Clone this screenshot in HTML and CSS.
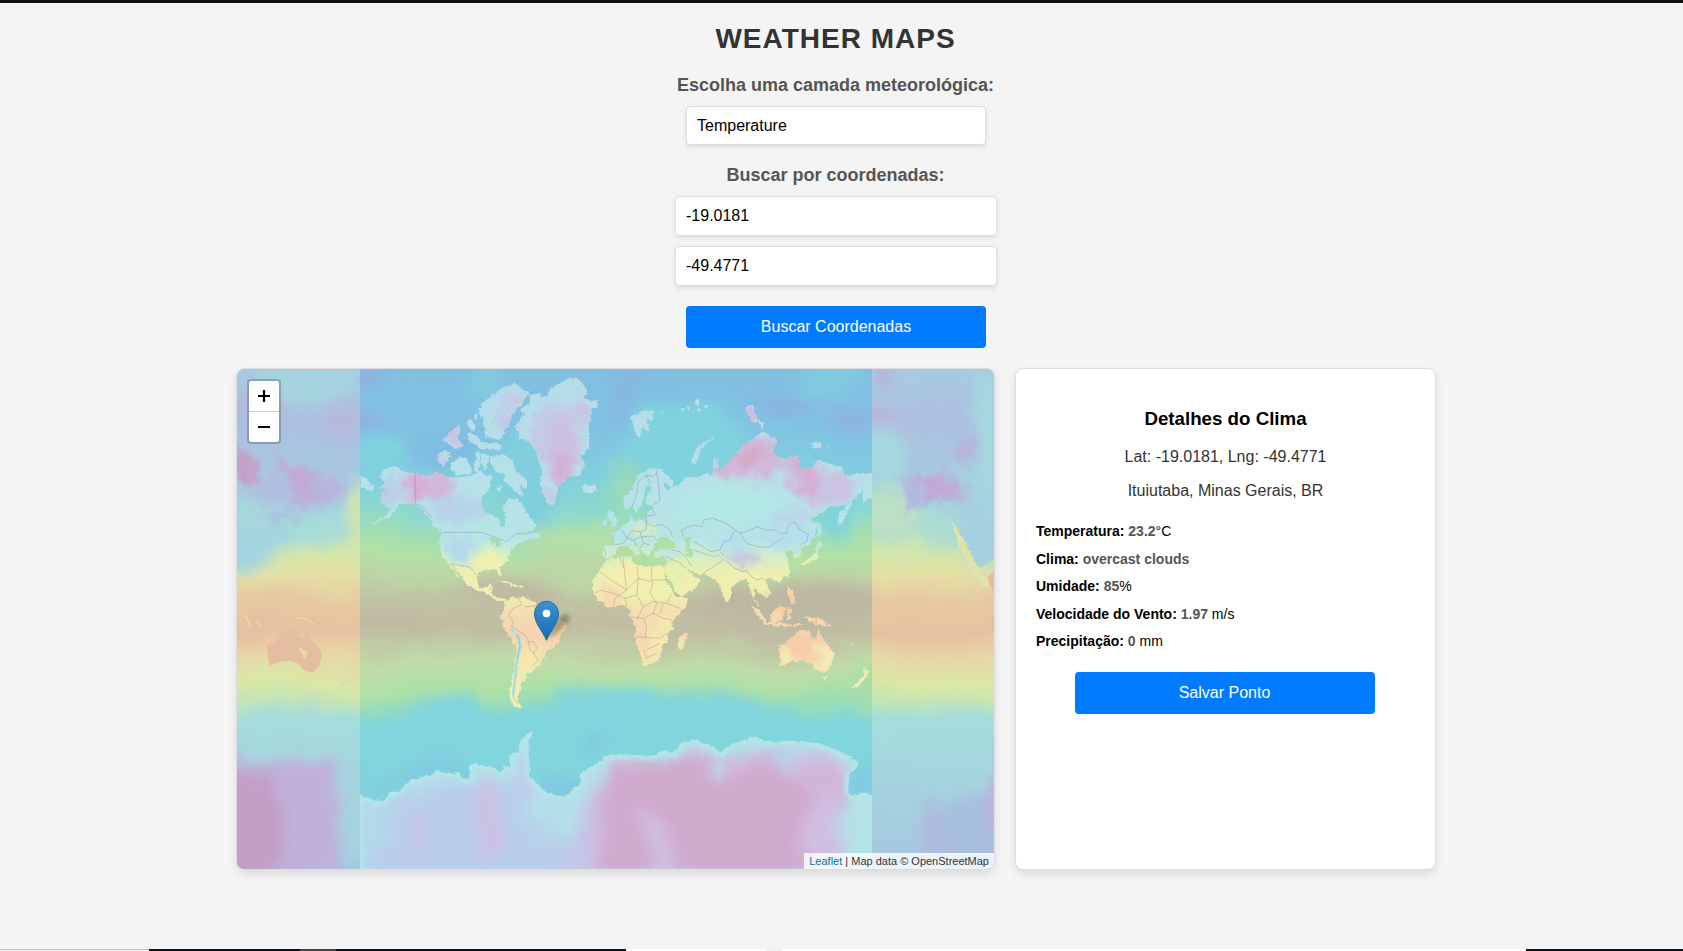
FILE: index.html
```
<!DOCTYPE html>
<html lang="pt-BR">
<head>
<meta charset="utf-8">
<title>Weather Maps</title>
<link rel="stylesheet" href="styles.css">
</head>
<body>
<div class="top-strip"></div>
<main class="page">
  <h1 class="title">WEATHER MAPS</h1>
  <div class="form">
    <label class="label">Escolha uma camada meteorológica:</label>
    <div class="field select">Temperature</div>
    <label class="label label-coords">Buscar por coordenadas:</label>
    <div class="field input">-19.0181</div>
    <div class="field input">-49.4771</div>
    <button class="button search">Buscar Coordenadas</button>
  </div>
  <div class="content">
    <section class="map">
      <svg class="map-canvas" viewBox="0 0 757 500" width="757" height="500">
        <defs>
          <linearGradient id="ocean" gradientUnits="userSpaceOnUse" x1="0" y1="0" x2="0" y2="500">
            <stop offset="0" stop-color="#81bfe1"/><stop offset=".12" stop-color="#82c2e2"/>
            <stop offset=".22" stop-color="#80d0de"/><stop offset=".29" stop-color="#8ed9cc"/>
            <stop offset=".34" stop-color="#a4deb0"/><stop offset=".375" stop-color="#b2e0a4"/>
            <stop offset=".42" stop-color="#bdd4a5"/><stop offset=".46" stop-color="#bfc4a3"/>
            <stop offset=".52" stop-color="#c1bca3"/><stop offset=".555" stop-color="#c0cba5"/>
            <stop offset=".59" stop-color="#bfdba8"/><stop offset=".64" stop-color="#aee0a6"/>
            <stop offset=".67" stop-color="#9ddcb5"/><stop offset=".71" stop-color="#84d6d8"/>
            <stop offset=".8" stop-color="#80d3df"/><stop offset=".88" stop-color="#80c8e2"/>
          </linearGradient>
          <linearGradient id="side" gradientUnits="userSpaceOnUse" x1="0" y1="0" x2="0" y2="500">
            <stop offset="0" stop-color="#a5cbe0"/><stop offset=".1" stop-color="#aebfe0"/>
            <stop offset=".18" stop-color="#a7c6e0"/><stop offset=".27" stop-color="#a4d8de"/>
            <stop offset=".33" stop-color="#aadcd4"/><stop offset=".37" stop-color="#d2e6ac"/>
            <stop offset=".41" stop-color="#e6e1a5"/><stop offset=".46" stop-color="#e6c9a1"/>
            <stop offset=".53" stop-color="#e6c1a0"/><stop offset=".58" stop-color="#e7d7a5"/>
            <stop offset=".63" stop-color="#dbe7a6"/><stop offset=".66" stop-color="#c8e5b2"/>
            <stop offset=".7" stop-color="#a5ddda"/><stop offset=".78" stop-color="#a4d7de"/>
            <stop offset="1" stop-color="#a5c5e0"/>
          </linearGradient>
          <linearGradient id="land" gradientUnits="userSpaceOnUse" x1="0" y1="0" x2="0" y2="360">
            <stop offset="0" stop-color="#b5dbe9"/><stop offset=".36" stop-color="#b6e2e8"/>
            <stop offset=".47" stop-color="#b5e5e6"/><stop offset=".52" stop-color="#d4efc8"/>
            <stop offset=".57" stop-color="#f0eeb0"/><stop offset=".63" stop-color="#efefb0"/>
            <stop offset=".67" stop-color="#f3dfb0"/><stop offset=".74" stop-color="#f5d3b0"/>
            <stop offset=".8" stop-color="#f4e2b0"/><stop offset=".9" stop-color="#f1f0b0"/>
            <stop offset="1" stop-color="#e8f0b0"/>
          </linearGradient>
          <linearGradient id="pin" x1="0" y1="0" x2="0" y2="1">
            <stop offset="0" stop-color="#3d93d2"/><stop offset="1" stop-color="#1769b5"/>
          </linearGradient>
          <filter id="soft" filterUnits="userSpaceOnUse" x="-40" y="-40" width="840" height="580">
            <feTurbulence type="fractalNoise" baseFrequency=".02" numOctaves="3" seed="6" result="n"/>
            <feGaussianBlur in="SourceGraphic" stdDeviation="7" result="b"/>
            <feDisplacementMap in="b" in2="n" scale="22" xChannelSelector="R" yChannelSelector="G"/></filter>
          <filter id="mid" filterUnits="userSpaceOnUse" x="-40" y="-40" width="840" height="580">
            <feTurbulence type="fractalNoise" baseFrequency=".07" numOctaves="3" seed="4" result="n"/>
            <feGaussianBlur in="SourceGraphic" stdDeviation="4" result="b"/>
            <feDisplacementMap in="b" in2="n" scale="20" xChannelSelector="R" yChannelSelector="G"/></filter>
          <filter id="wavy" filterUnits="userSpaceOnUse" x="-40" y="-40" width="840" height="580">
            <feTurbulence type="fractalNoise" baseFrequency=".012 .016" numOctaves="3" seed="8" result="n"/>
            <feDisplacementMap in="SourceGraphic" in2="n" scale="36" xChannelSelector="R" yChannelSelector="G"/></filter>
          <filter id="coast" filterUnits="userSpaceOnUse" x="0" y="0" width="757" height="500">
            <feTurbulence type="fractalNoise" baseFrequency=".22" numOctaves="2" seed="3" result="n"/>
            <feDisplacementMap in="SourceGraphic" in2="n" scale="5" xChannelSelector="R" yChannelSelector="G"/></filter>
          <filter id="edge" filterUnits="userSpaceOnUse" x="0" y="0" width="757" height="500"><feGaussianBlur stdDeviation="2.5"/></filter>
          <filter id="pinshade" x="-50%" y="-50%" width="200%" height="200%"><feGaussianBlur stdDeviation="2.2"/></filter>
          <clipPath id="world"><rect x="123" width="512" height="500"/></clipPath>
          <clipPath id="left"><rect width="123" height="500"/></clipPath>
          <clipPath id="right"><rect x="635" width="122" height="500"/></clipPath>

          <path id="america" d="M450 345 470 325 495 318 530 338 556 338 590 345 625 335 650 350 690 352 720 348 760 340 790 350 760 390 752 430 770 460 805 475 812 500 825 500 825 470 820 440 835 415 865 420 885 445 900 470 918 495 905 515 870 520 880 525 930 518 930 530 895 540 880 545 850 560 840 575 835 600 810 625 816 650 807 648 800 628 770 628 745 635 740 655 748 680 765 685 780 670 788 678 785 700 800 712 830 716 830 724 798 722 775 703 740 690 710 675 700 655 680 630 662 612 692 658 684 652 655 610 640 595 630 570 628 540 635 518 615 500 600 480 580 450 555 435 530 430 508 432 480 470 440 488 395 500 440 483 470 465 485 450 455 430 450 400 470 385 445 385 465 370Z"/>
          <g id="arctic">
            <path d="M625 280 650 270 665 290 640 318 625 305ZM665 305 690 290 710 290 725 330 718 346 680 345 660 325ZM638 240 660 215 690 195 690 225 680 235 703 255 680 268 665 258ZM710 182 722 178 735 195 730 215 718 205ZM740 270 752 280 745 335 733 330ZM730 165 740 160 742 175 732 176ZM748 145 762 125 785 105 795 130 780 150 790 180 780 210 765 205 757 180ZM710 220 738 222 748 240 760 250 752 260 725 248ZM758 275 775 290 770 330 757 320ZM390 345 410 358 432 380 428 395 405 385 390 382Z"/>
            <path transform="translate(750)" d="M18 125 60 85 100 70 147 95 130 130 104 152 85 200 60 240 20 232 10 210 40 190 25 165 5 150ZM-5 245 65 252 65 270-5 268ZM25 290 70 283 100 300 105 330 142 360 140 385 115 375 132 408 100 392 70 360 75 345 40 330ZM-10 325 30 350 30 390 12 405-10 395ZM5 280 18 290 14 315 0 310ZM50 380 66 380 62 393 50 392Z"/>
          </g>
          <path id="greenland" d="M145 105 180 100 183 115 205 105 205 92 230 75 260 55 290 55 322 88 315 115 332 122 357 120 350 140 330 150 335 165 325 200 328 260 300 290 315 320 300 345 265 352 235 382 225 430 215 437 195 415 180 370 187 330 172 290 160 260 140 240 115 240 120 215 100 200 132 165 120 150 148 130Z"/>
          <path id="islands" d="M305 380 325 375 345 375 350 390 330 404 312 395ZM453 172 490 153 520 155 522 180 500 180 508 215 498 217 490 200 478 235 462 205ZM702 230 665 265 645 320 633 305 650 262 690 235ZM602 148 615 143 612 158ZM620 138 632 140 625 152ZM645 122 655 115 660 132 650 138ZM645 150 665 146 655 158ZM670 138 686 134 680 146ZM632 153 640 153 636 160ZM543 156 550 158 546 162ZM383 448 402 457 413 495 388 510 397 492 383 475ZM370 480 382 478 380 500 366 500ZM50 660 75 660 112 678 108 682 75 670ZM118 675 135 677 134 684 118 683ZM1012 485 1022 490 1021 532 1014 530ZM1012 543 1030 550 1013 573 1014 597 990 608 967 617 963 608 995 590 1008 570ZM793 145 815 133 835 185 818 188ZM836 182 855 190 842 207ZM993 248 1020 247 1025 262 1000 266ZM1033 257 1050 262 1048 266ZM922 650 928 650 926 662ZM922 678 935 690 948 730 934 735 925 700ZM870 765 900 735 917 745 908 778 885 788 873 782ZM812 735 830 745 860 780 867 795 855 794 835 770ZM617 812 622 828 607 870 594 868 597 835 610 825Z"/>
          <path id="eurasia" d="M370 555 405 555 400 525 390 518 418 512 425 498 450 485 450 462 462 480 500 478 505 455 520 448 525 437 500 435 497 415 512 390 510 375 498 385 490 410 484 438 466 458 456 440 435 450 430 415 455 390 475 345 510 325 535 325 582 362 575 382 545 372 560 388 600 372 612 352 650 352 680 340 697 345 700 295 715 295 716 340 730 320 755 295 790 255 850 215 890 240 880 280 910 295 955 288 960 325 1000 322 1010 300 1050 310 1090 325 1095 345 1170 338 1180 345 1180 410 1150 425 1145 395 1120 420 1095 470 1075 505 1075 465 1100 435 1050 440 995 475 990 485 1012 490 1005 530 985 555 965 560 962 590 945 598 940 570 910 575 925 600 928 640 900 665 865 655 855 668 875 700 860 715 837 700 825 682 822 715 838 738 832 742 815 705 800 655 780 660 757 680 748 720 738 730 720 680 705 658 685 645 655 642 620 625 640 648 662 660 640 690 600 710 585 690 565 655 553 632 562 600 558 590 525 590 522 572 540 570 585 562 580 545 555 530 530 540 518 565 505 592 490 575 475 555 455 540 485 580 470 585 440 555 420 558 405 577 395 595 372 595Z"/>
          <path id="africa" d="M380 600 425 588 455 590 455 610 500 620 550 615 555 650 575 690 590 712 625 710 620 735 590 770 577 785 580 805 560 825 562 845 545 855 542 890 520 910 490 916 478 880 465 840 468 800 450 770 448 745 430 735 380 740 355 720 337 690 338 660 360 630Z"/>
          <path id="southamerica" d="M66 10 78-28 95-38 130-38 160-25 185 0 220 20 258 36 258 50 240 75 238 100 202 120 180 165 165 168 162 185 135 190 140 205 122 220 125 235 112 260 114 280 128 292 102 290 88 262 95 200 105 160 108 110 75 60 62 25Z"/>
          <path id="australia" d="M145 105 175 92 190 75 215 60 240 62 238 78 258 88 265 55 275 85 300 110 312 130 305 165 285 188 258 182 240 160 215 152 185 155 155 167 150 140Z"/>
          <path id="oceania" d="M276 200 291 200 284 216ZM398 170 418 185 405 207 380 234 368 230 395 205 405 190ZM113 36 185 42 186 50 113 45ZM170-5 190-2 178 8 188 25 175 28 170 12ZM218 18 245 22 262 20 300 50 270 46 245 38ZM360 95 372 106 366 106ZM190 43 215 42 210 50 192 48ZM290 35 305 40 300 43Z"/>
          <path id="antarctica" d="M385 553 425 570 460 572 485 545 510 545 530 518 575 500 612 490 617 482 650 490 690 490 695 505 722 505 718 465 740 458 752 468 785 470 815 485 822 465 845 475 838 455 835 435 865 430 868 400 880 385 915 360 895 392 900 500 950 548 1005 560 1050 520 1050 490 1080 475 1125 440 1160 432 1270 438 1300 422 1330 425 1350 405 1390 388 1430 405 1450 408 1470 430 1500 405 1530 392 1570 380 1620 395 1700 392 1770 400 1840 430 1885 455 1880 475 1855 495 1855 545 1865 557 1890 548 1930 553 1930 790 385 790Z"/>
          <mask id="landmask" maskUnits="userSpaceOnUse" x="0" y="0" width="757" height="500">
            <g filter="url(#coast)" fill="#fff">
              <g transform="translate(-7 -9) scale(.3333)"><use href="#america"/><use href="#arctic"/>
                <g transform="translate(750)"><use href="#greenland"/><use href="#islands"/><use href="#eurasia"/><use href="#africa"/>
                  <path fill="#000" d="M527 553 548 535 560 548 585 558 570 567 530 565ZM610 535 635 530 625 550 638 572 636 590 618 588 620 562ZM470 460 480 462 478 472ZM30 530 55 535 65 555 50 562 45 545 35 555Z"/></g></g>
              <g transform="translate(243 241) scale(.3333)"><use href="#southamerica"/></g>
              <g transform="translate(493 241) scale(.3333)"><use href="#australia"/><use href="#oceania"/></g>
            </g>
          </mask>
          <mask id="icemask" maskUnits="userSpaceOnUse" x="0" y="0" width="757" height="500">
            <g filter="url(#coast)"><g transform="translate(-7 241) scale(.3333)" fill="#fff"><use href="#antarctica"/></g><rect y="440" x="100" width="560" height="60" fill="#fff"/></g>
            <rect y="440" x="100" width="560" height="60" fill="#fff"/>
          </mask>
        </defs>

        <g clip-path="url(#left)">
          <rect x="-40" y="-40" width="840" height="580" fill="url(#side)" filter="url(#wavy)"/>
          <g filter="url(#soft)">
            <ellipse cx="75" cy="10" rx="52" ry="24" fill="#a5d4df"/><ellipse cx="22" cy="35" rx="25" ry="16" fill="#b3bbdf"/>
            <ellipse cx="105" cy="52" rx="22" ry="10" fill="#b8b8dc"/><ellipse cx="60" cy="120" rx="60" ry="16" fill="#b0bde0"/>
            <path d="M110 200 118 120 135 120 135 215Z" fill="#d4e4ac"/><path d="M-20 150 60 160 40 185 15 205-20 205Z" fill="#a4d4e0"/>
            <path d="M-20 380 25 400 60 385 98 392 104 500-20 520Z" fill="#c1b0d9"/>
            <path d="M-20 398 35 410 50 440 35 520-20 520Z" fill="#c39fc6"/>
            <path d="M98 420 130 430 130 500 112 485Z" fill="#a4d4de"/>
          </g>
          <g filter="url(#mid)">
            <path d="M-4 78 12 82 25 110 10 118-4 104Z" fill="#c4a0c8"/><path d="M36 88 58 98 75 100 80 130 66 138 50 115Z" fill="#c4a2ca" opacity=".85"/>
            <path d="M45 95 100 110 105 125 75 140 55 125Z" fill="#c0add8" opacity=".6"/><ellipse cx="45" cy="148" rx="20" ry="5" fill="#abbce2"/>
          </g>
          <g transform="translate(-19 241) scale(.3333)" fill="#e5bea1"><use href="#australia"/></g>
          <path d="M18 280 22 290 18 293ZM61 278 71 283 68 290Z" fill="#e6dca2"/>
          <g fill="none" stroke="#e4e1a2" stroke-width="1.2"><path d="M8 246 14 258M20 252 24 260M60 249 68 250 77 255"/><path d="M104 317 113 310" stroke="#b4dfc4"/></g>
        </g>

        <g clip-path="url(#right)">
          <rect x="-40" y="-40" width="840" height="580" fill="url(#side)" filter="url(#wavy)"/>
          <g filter="url(#soft)">
            <ellipse cx="645" cy="5" rx="14" ry="10" fill="#b8b4da"/><ellipse cx="640" cy="48" rx="18" ry="9" fill="#bbb3d9"/>
            <ellipse cx="650" cy="90" rx="24" ry="28" fill="#a5d8de"/><path d="M740 10 770 0 770 130 738 120Z" fill="#a3d9de"/>
            <ellipse cx="650" cy="145" rx="32" ry="26" fill="#bce0c4"/><path d="M715 140 770 120 770 185 738 200Z" fill="#a5d2e0"/>
            <ellipse cx="730" cy="470" rx="40" ry="46" fill="#a8bfe0"/><ellipse cx="692" cy="460" rx="10" ry="30" fill="#b0bade"/>
            <ellipse cx="758" cy="435" rx="8" ry="30" fill="#beb0da"/>
          </g>
          <g filter="url(#mid)">
            <path d="M662 108 700 105 720 115 740 135 720 140 690 132 668 145Z" fill="#b1b9df"/>
            <path d="M680 108 695 104 718 108 722 125 690 130Z" fill="#c3a8d2"/><path d="M715 85 735 60 740 75 732 95Z" fill="#b8b4dc"/>
          </g>
          <path d="M722 160 757 150V190L738 202Z" fill="#a5d0e0" opacity=".8" filter="url(#coast)"/>
          <path d="M714 150 722 178 735 203 745 216 757 221V216L746 206 736 190 726 170Z" fill="#dfe4a6" filter="url(#coast)"/>
          <path d="M757 201 751 208 752 216 757 222Z" fill="#e5bea1"/>
        </g>

        <g clip-path="url(#world)">
          <rect x="-40" y="-40" width="840" height="580" fill="url(#ocean)" filter="url(#wavy)"/>
          <g filter="url(#soft)">
            <ellipse cx="133" cy="6" rx="16" ry="9" fill="#92afe0"/><ellipse cx="130" cy="52" rx="16" ry="8" fill="#92afe0"/>
            <ellipse cx="142" cy="88" rx="20" ry="18" fill="#80d4dd"/><ellipse cx="205" cy="80" rx="40" ry="22" fill="#80bde2"/>
            <ellipse cx="250" cy="15" rx="16" ry="24" fill="#80cbe0"/><ellipse cx="290" cy="110" rx="26" ry="62" fill="#80cfde"/>
            <path d="M375 120 400 40 480 30 505 60 500 110 440 125Z" fill="#80d2de"/>
            <path d="M365 75 388 0 412 0 385 45 358 85Z" fill="#86b6e0"/><ellipse cx="390" cy="118" rx="18" ry="24" fill="#98d9b8"/>
            <ellipse cx="340" cy="172" rx="60" ry="14" fill="#b3dea8"/><ellipse cx="350" cy="200" rx="60" ry="12" fill="#bdd6a6"/>
            <ellipse cx="590" cy="12" rx="30" ry="18" fill="#80cbe1"/><ellipse cx="545" cy="35" rx="35" ry="10" fill="#8ab4e0"/>
            <ellipse cx="615" cy="50" rx="24" ry="10" fill="#90b1e0"/><ellipse cx="598" cy="145" rx="20" ry="24" fill="#80d3dd"/>
            <ellipse cx="150" cy="252" rx="45" ry="10" fill="#c1b9a3"/><ellipse cx="280" cy="222" rx="50" ry="12" fill="#c0b8a3"/>
            <ellipse cx="555" cy="235" rx="110" ry="20" fill="#bdb7a2"/>
            <path d="M160 350 185 330 225 325 250 345 300 340 330 315 400 322 500 325 530 335 560 345 615 345 640 375 640 440 120 440 120 365Z" fill="#81d5dd"/>
            <path d="M560 330 578 350 600 345 580 325Z" fill="#98dbb8"/>
            <path d="M120 430 200 385 240 400 250 420Z" fill="#80cce1"/><ellipse cx="320" cy="420" rx="35" ry="12" fill="#80c9e2"/><ellipse cx="355" cy="378" rx="8" ry="12" fill="#80c8e2"/>
            <path d="M618 300 645 300 645 360 628 345Z" fill="#a5deaa"/><ellipse cx="622" cy="415" rx="14" ry="18" fill="#80cae2"/>
          </g>
          <g mask="url(#landmask)">
            <rect width="757" height="500" fill="url(#land)"/>
            <g filter="url(#mid)">
              <ellipse cx="192" cy="118" rx="28" ry="18" fill="#cbbfe2"/><ellipse cx="179" cy="118" rx="9" ry="14" fill="#d8abce"/><ellipse cx="200" cy="118" rx="9" ry="10" fill="#d6b4d8"/><ellipse cx="222" cy="140" rx="30" ry="12" fill="#b6d3ea"/>
              <ellipse cx="152" cy="124" rx="10" ry="14" fill="#bccbe9"/><ellipse cx="222" cy="180" rx="15" ry="14" fill="#b4daea"/>
              <ellipse cx="206" cy="90" rx="5" ry="6" fill="#d0bce0"/><ellipse cx="218" cy="68" rx="10" ry="9" fill="#c9c3e4"/>
              <ellipse cx="278" cy="31" rx="7" ry="5" fill="#d8b5d8"/><ellipse cx="270" cy="52" rx="10" ry="14" fill="#c0cbe8"/>
              <ellipse cx="320" cy="68" rx="26" ry="34" fill="#c4c8e6"/><ellipse cx="325" cy="82" rx="16" ry="32" fill="#cdbfe2"/><ellipse cx="325" cy="99" rx="7" ry="16" fill="#d5aed2"/><ellipse cx="314" cy="128" rx="4" ry="7" fill="#d3b6da"/><ellipse cx="345" cy="40" rx="6" ry="10" fill="#cebfe2"/>
              <path d="M475 105 485 85 520 65 548 75 552 92 530 108 500 108Z" fill="#d1b8da"/><ellipse cx="512" cy="88" rx="15" ry="9" fill="#d5a8c9"/><ellipse cx="484" cy="98" rx="6" ry="7" fill="#d8aed0"/>
              <path d="M540 92 565 84 590 100 622 112 615 130 580 138 555 122Z" fill="#cbc2e3"/><path d="M550 88 562 90 575 100 582 125 572 128 560 110Z" fill="#d4aed0"/>
              <ellipse cx="514" cy="45" rx="8" ry="9" fill="#d3b8dc"/><ellipse cx="490" cy="135" rx="50" ry="18" fill="#b3e9e5"/><ellipse cx="557" cy="148" rx="22" ry="5" fill="#bccdea"/>
              <ellipse cx="508" cy="190" rx="18" ry="6" fill="#c6c1e4"/><ellipse cx="495" cy="176" rx="20" ry="7" fill="#b2def0"/><ellipse cx="430" cy="183" rx="16" ry="4" fill="#b2e0ea"/>
              <ellipse cx="550" cy="168" rx="28" ry="12" fill="#b6dfec"/><ellipse cx="570" cy="195" rx="16" ry="10" fill="#e6efb2"/>
              <ellipse cx="408" cy="160" rx="16" ry="6" fill="#dcedc0"/><ellipse cx="254" cy="192" rx="14" ry="12" fill="#f0efb0"/>
              <ellipse cx="292" cy="295" rx="10" ry="14" fill="#f3e9b0"/>
              <ellipse cx="430" cy="270" rx="18" ry="26" fill="#f2e8b0"/><ellipse cx="400" cy="205" rx="30" ry="12" fill="#f2eeb0"/><ellipse cx="440" cy="200" rx="16" ry="10" fill="#e6f0b0"/>
              <ellipse cx="565" cy="277" rx="22" ry="14" fill="#f5ccac"/><ellipse cx="565" cy="232" rx="40" ry="16" fill="#f5cda8"/><ellipse cx="373" cy="228" rx="12" ry="12" fill="#f5d9b2"/>
            </g>
            <g fill="none" stroke="#8d84a0" stroke-opacity=".5" stroke-width="2.4" transform="translate(-7 -9) scale(.3333)">
              <path d="M556 340V432L575 438 605 475M637 517H755L790 530 830 545 860 520 880 522M660 611 700 618 720 622 740 645M790 670 780 690"/>
              <g transform="translate(750)">
                <path d="M455 445 470 400 475 365 500 345 520 350 535 330M500 345 512 370M530 335 535 370 540 420 520 435M520 450 525 465 500 468 495 485 520 500 545 492 570 510 578 530M500 478 498 510 480 515 455 512 440 535 460 540 485 530 520 528 530 540M372 560 378 590M400 555 430 550 440 535 425 510M480 515 490 550 510 555M460 540 470 560M490 550 480 565"/>
                <path d="M610 530 605 510 640 495 665 500 672 480 700 475 740 490 765 510 780 520 810 510 830 500 860 510 890 510 900 520 920 520 925 495 945 487 960 510 985 522 980 545 960 555M780 520 800 550 840 562 870 560 890 545 915 530M765 510 750 540 730 545 720 570 690 575 670 560 640 545M640 570 670 580 700 590 715 585 730 600 700 620 670 640M735 600 765 625 790 635 800 632M575 570 600 575 620 595 635 620M560 590 600 610 620 625M720 575 735 590M800 632 815 650 830 660 850 655"/>
              </g>
            </g>
            <g fill="none" stroke="#b08478" stroke-opacity=".5" stroke-width="2.4" transform="translate(243 -9) scale(.3333)">
              <path d="M360 635 385 655 440 690 425 560 420 600 432 625M440 690 475 655 472 620M475 655 515 665V615M515 660H558M475 655 470 705 435 715 400 700 360 690 345 700M440 690 405 715 400 738M470 705 490 740 520 725 560 730 575 700M520 665 510 700 530 730 520 760M435 715 440 740M490 740 470 780M560 730 600 745M540 760 550 730M450 770 490 775 520 760 550 775 575 780M468 830 540 835 560 820M490 775 500 800 495 835M500 870 540 850M490 870 500 895 530 880"/>
              <path transform="translate(0 750)" d="M115-38 125-15 100-5 85 15 100 35 95 50 110 60 135 75 145 95 160 95 172 115 160 130 175 150 160 165M108 75 125 110 112 140 108 200 100 260 112 280M135-10 165-12 175-20M145 95 150 120 165 130"/>
            </g>
            <path d="M579 245V262" fill="none" stroke="#c08a80" stroke-opacity=".5"/>
            <path d="M548 280 552 294M578 278 594 286 590 298" fill="none" stroke="#f3eeb0" stroke-width="6" stroke-linecap="round" stroke-linejoin="round" filter="url(#edge)"/>
            <path d="M274 260 282 268 283 278 280 292 278 308 276 326" fill="none" stroke="#a6dfe4" stroke-width="2.6"/>
            <path d="M281 266 283 276 280 290" fill="none" stroke="#8cc8e4" stroke-width="1"/>
          </g>
          <g mask="url(#icemask)">
            <rect y="350" width="757" height="150" fill="#b3dfe9"/>
            <g filter="url(#soft)">
              <path d="M120 520 150 440 200 415 280 410 290 450 340 460 330 520Z" fill="#b8cdea"/><ellipse cx="250" cy="450" rx="12" ry="44" fill="#cdc0e4"/><ellipse cx="180" cy="465" rx="12" ry="24" fill="#c2c8e9"/>
              <ellipse cx="130" cy="460" rx="18" ry="26" fill="#b3d9ea"/><ellipse cx="286" cy="405" rx="6" ry="22" fill="#c2c8e8"/><ellipse cx="320" cy="448" rx="18" ry="26" fill="#b3e0e8"/><path d="M300 520 330 480 350 430 370 410 370 520Z" fill="#c3c6e7"/>
              <path d="M358 430 375 392 430 388 460 374 500 386 550 378 600 388 616 410 600 450 612 510 345 510Z" fill="#cebfe2"/>
              <path d="M368 402 470 382 610 398 590 510 355 510Z" fill="#d1b5d8"/>
              <path d="M370 400 460 384 478 410 500 415 515 396 560 412 580 435 566 540 440 540 420 470 410 540 352 540 372 460Z" fill="#d0aacd"/>
              <ellipse cx="547" cy="390" rx="14" ry="14" fill="#b9cde8"/><ellipse cx="480" cy="400" rx="8" ry="14" fill="#b4d8ea"/><path d="M400 440 425 450 445 520 420 520Z" fill="#d0bde0"/>
              <ellipse cx="586" cy="470" rx="18" ry="44" fill="#cfbfe2"/><ellipse cx="628" cy="460" rx="18" ry="44" fill="#b2e3e7"/>
            </g>
            <g filter="url(#edge)"><g fill="none" stroke="#b4e5e8" stroke-width="22" transform="translate(-7 241) scale(.3333)"><use href="#antarctica"/></g></g>
          </g>
        </g>

        <g>
          <path d="M310 270 319 252Q330 241 333 248 331 258 310 270Z" fill="#5b5540" opacity=".5" filter="url(#pinshade)"/>
          <path d="M309.500 271.300C305 261 297.500 254.500 297.500 244.300A12 12 0 0 1 321.500 244.300C321.500 254.500 314 261 309.500 271.300Z" fill="url(#pin)" stroke="#2e6c97" stroke-width="1"/>
          <circle cx="309.500" cy="244.500" r="4.200" fill="#fff" stroke="#2d6d9d" stroke-width=".6"/>
        </g>
      </svg>
      <div class="zoom">
        <a class="zoom-button"><svg width="12" height="12" viewBox="0 0 12 12"><path d="M6 0v12M0 6h12" stroke="#000" stroke-width="2.200"/></svg></a>
        <a class="zoom-button"><svg width="12" height="12" viewBox="0 0 12 12"><path d="M0 6h12" stroke="#000" stroke-width="2"/></svg></a>
      </div>
      <div class="attribution"><a>Leaflet</a> | Map data © OpenStreetMap</div>
    </section>
    <section class="details">
      <h3 class="details-title">Detalhes do Clima</h3>
      <p class="place">Lat: -19.0181, Lng: -49.4771</p>
      <p class="place">Ituiutaba, Minas Gerais, BR</p>
      <div class="readings">
        <div><b>Temperatura:</b> <strong>23.2</strong>°C</div>
        <div><b>Clima:</b> <strong>overcast clouds</strong></div>
        <div><b>Umidade:</b> <strong>85</strong>%</div>
        <div><b>Velocidade do Vento:</b> <strong>1.97</strong> m/s</div>
        <div><b>Precipitação:</b> <strong>0</strong> mm</div>
      </div>
      <button class="button">Salvar Ponto</button>
    </section>
  </div>
</main>
<div class="bottom-strip"><i class="s1"></i><i class="s2"></i><i class="s3"></i><i class="s2b"></i><i class="s4"></i><i class="s5"></i><i class="s6"></i><i class="s7"></i></div>
</body>
</html>
```
FILE: styles.css
```
* { box-sizing: border-box; }
body {
  margin: 0;
  height: 951px;
  overflow: hidden;
  display: flex;
  flex-direction: column;
  background: #f4f4f4;
  font-family: "Liberation Sans", Arial, sans-serif;
}
.top-strip { height: 3px; background: #120f18; flex: none; }
.page {
  width: 1672px;
  flex: 1;
  display: flex;
  flex-direction: column;
  align-items: center;
}
.title {
  margin: 20px 1px 0 0;
  font-size: 28px;
  line-height: 31px;
  letter-spacing: 1px;
  color: #333;
}
.form { display: flex; flex-direction: column; align-items: center; }
.label {
  margin-top: 20px;
  margin-right: 1px;
  font-size: 18px;
  line-height: 22px;
  font-weight: bold;
  color: #555;
}
.field {
  background: #fff;
  border: 1px solid #ddd;
  border-radius: 4px;
  box-shadow: 0 2px 4px rgba(0, 0, 0, .1);
  padding: 0 10px;
  font-size: 16px;
}
.select { width: 300px; height: 39px; line-height: 37px; margin-top: 10px; }
.label-coords { margin-top: 19px; }
.input { width: 322px; height: 40px; line-height: 37px; margin-top: 10px; }
.button {
  width: 300px;
  height: 42px;
  border: 0;
  border-radius: 4px;
  background: #007bff;
  color: #fff;
  font: 16px "Liberation Sans", Arial, sans-serif;
}
.search { margin-top: 20px; }
.content { width: 1200px; margin-top: 20px; display: flex; gap: 20px; }
.map, .details {
  height: 502px;
  border: 1px solid #ddd;
  border-radius: 8px;
  box-shadow: 0 4px 8px rgba(0, 0, 0, .1);
}
.map { width: 759px; position: relative; overflow: hidden; }
.map-canvas { display: block; }
.zoom {
  position: absolute;
  left: 10px;
  top: 10px;
  width: 34px;
  border: 2px solid rgba(0, 0, 0, .2);
  border-radius: 4px;
  background-clip: padding-box;
  background-color: #fff;
}
.zoom-button { display: flex; align-items: center; justify-content: center; height: 30px; }
.zoom-button:first-child { height: 31px; border-bottom: 1px solid #ccc; }
.attribution {
  position: absolute;
  right: 0;
  bottom: 0;
  height: 16px;
  padding: 0 5px;
  background: rgba(255, 255, 255, .8);
  color: #333;
  font-size: 11px;
  line-height: 16px;
  white-space: nowrap;
}
.attribution a { color: #0078a8; }
.details {
  flex: 1;
  background: #fff;
  padding: 39px 20px 20px;
  display: flex;
  flex-direction: column;
  align-items: center;
}
.details-title { margin: 0 0 18px; font-size: 18.720px; line-height: 22px; color: #000; }
.place { margin: 0 0 16px; font-size: 16px; line-height: 18px; color: #333; }
.readings { align-self: stretch; margin-top: 2px; font-size: 14px; line-height: 27.500px; color: #000; }
.readings strong { color: #555; }
.details .button { margin-top: 16px; margin-right: 2px; }
.bottom-strip { display: flex; height: 2px; flex: none; }
.s1 { width: 149px; background: #eee; border-top: 1px solid #c0c0c0; }
.s2 { width: 151px; background: #0e1116; }
.s3 { width: 36px; background: #444; }
.s2b { width: 290px; background: #0e1116; }
.s4 { width: 140px; background: #fff; }
.s5 { width: 16px; background: #eee; }
.s6 { width: 744px; background: #fff; }
.s7 { flex: 1; background: #0e1116; }
```
